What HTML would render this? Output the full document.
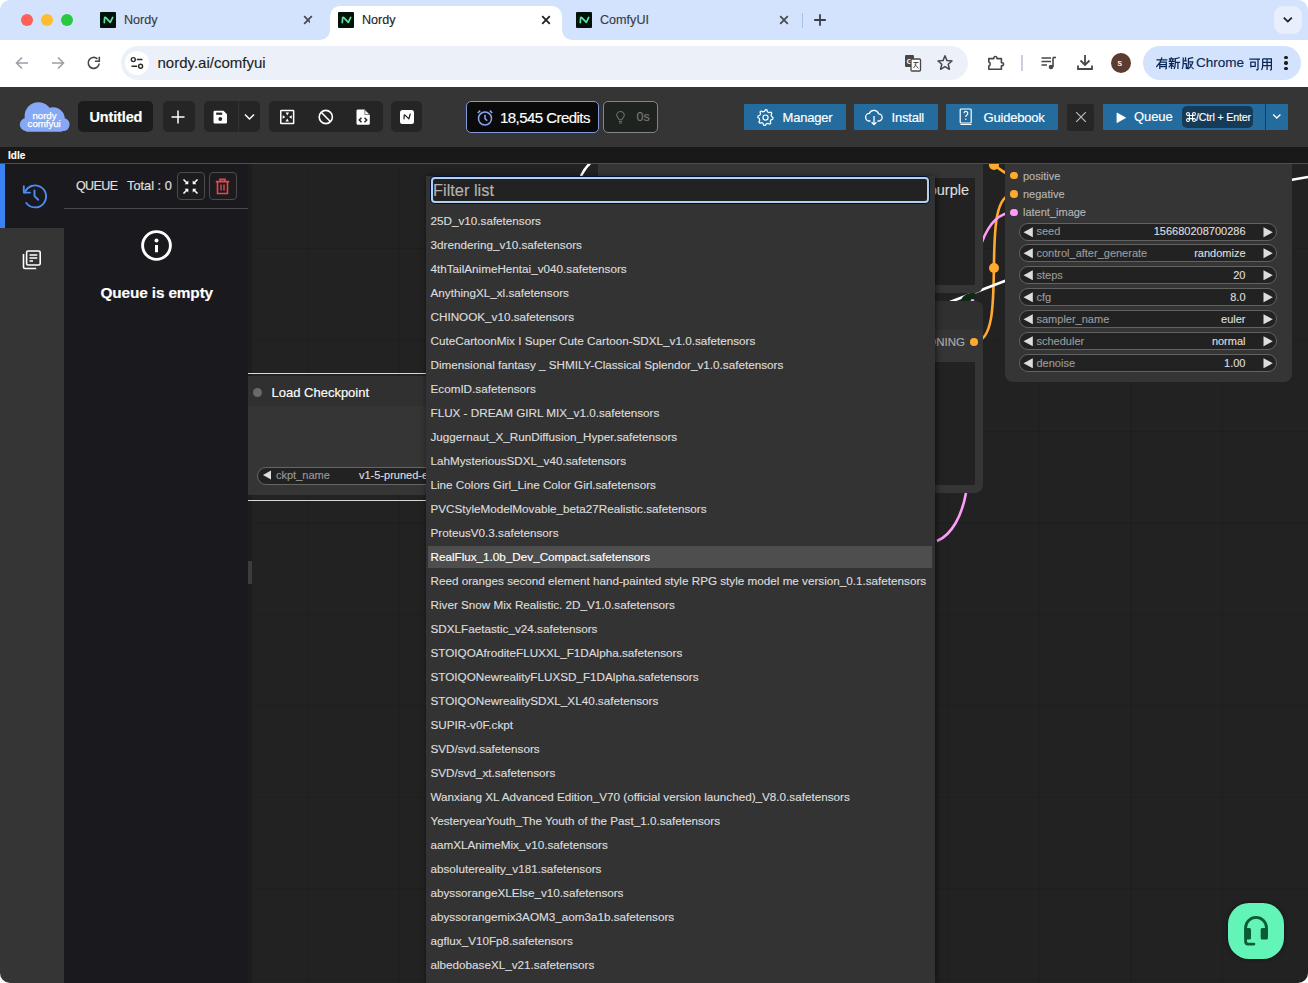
<!DOCTYPE html>
<html><head><meta charset="utf-8">
<style>
*{box-sizing:border-box;margin:0;padding:0}
html,body{width:1308px;height:983px;overflow:hidden;background:#fff;font-family:"Liberation Sans",sans-serif}
.win{position:absolute;left:0;top:0;width:1308px;height:983px;border-radius:10px;overflow:hidden;background:transparent}
.a{position:absolute}
.t{position:absolute;white-space:nowrap;line-height:1}
svg{position:absolute;overflow:visible}
</style></head><body>
<div class="win" style="-webkit-text-stroke:0.15px currentColor">
<!-- ============ CHROME TAB STRIP ============ -->
<div class="a" style="left:0;top:0;width:1308px;height:40px;background:#d3e3fd"></div>
<div class="a" style="left:21px;top:14px;width:12px;height:12px;border-radius:50%;background:#fe5f57"></div>
<div class="a" style="left:41px;top:14px;width:12px;height:12px;border-radius:50%;background:#febc2e"></div>
<div class="a" style="left:61px;top:14px;width:12px;height:12px;border-radius:50%;background:#28c840"></div>
<div id="tabs">
<!-- tab 1 -->
<div class="a" style="left:100px;top:12px;width:16px;height:16px;background:#03110b;border-radius:1px"></div>
<svg style="left:100px;top:12px" width="16" height="16"><path d="M4.3 10.6L4.6 6Q5 4.9 6 5.8L10.3 10.3L12.7 5.4" stroke="#5ce3a0" stroke-width="1.7" fill="none" stroke-linejoin="round" stroke-linecap="round"/></svg>
<div class="t" style="left:124px;top:14px;font-size:12.6px;color:#393c40">Nordy</div>
<svg style="left:303px;top:14.8px" width="10" height="10"><path d="M1.2 1.2L8.8 8.8M8.8 1.2L1.2 8.8" stroke="#474a4f" stroke-width="1.75"/></svg>
<!-- active tab -->
<div class="a" style="left:330px;top:6px;width:232px;height:40px;background:#fff;border-radius:10px 10px 0 0"></div>
<div class="a" style="left:320px;top:30px;width:10px;height:10px;background:#fff"></div>
<div class="a" style="left:310px;top:20px;width:20px;height:20px;background:#d3e3fd;border-radius:0 0 10px 0"></div>
<div class="a" style="left:562px;top:30px;width:10px;height:10px;background:#fff"></div>
<div class="a" style="left:562px;top:20px;width:20px;height:20px;background:#d3e3fd;border-radius:0 0 0 10px"></div>
<div class="a" style="left:338px;top:12px;width:16px;height:16px;background:#03110b;border-radius:1px"></div>
<svg style="left:338px;top:12px" width="16" height="16"><path d="M4.3 10.6L4.6 6Q5 4.9 6 5.8L10.3 10.3L12.7 5.4" stroke="#5ce3a0" stroke-width="1.7" fill="none" stroke-linejoin="round" stroke-linecap="round"/></svg>
<div class="t" style="left:362px;top:14px;font-size:12.6px;color:#1f1f1f">Nordy</div>
<svg style="left:541px;top:14.8px" width="10" height="10"><path d="M1.2 1.2L8.8 8.8M8.8 1.2L1.2 8.8" stroke="#1f1f1f" stroke-width="1.75"/></svg>
<!-- tab 3 -->
<div class="a" style="left:576px;top:12px;width:16px;height:16px;background:#03110b;border-radius:1px"></div>
<svg style="left:576px;top:12px" width="16" height="16"><path d="M4.3 10.6L4.6 6Q5 4.9 6 5.8L10.3 10.3L12.7 5.4" stroke="#5ce3a0" stroke-width="1.7" fill="none" stroke-linejoin="round" stroke-linecap="round"/></svg>
<div class="t" style="left:600px;top:14px;font-size:12.6px;color:#393c40">ComfyUI</div>
<svg style="left:779px;top:14.8px" width="10" height="10"><path d="M1.2 1.2L8.8 8.8M8.8 1.2L1.2 8.8" stroke="#474a4f" stroke-width="1.75"/></svg>
<div class="a" style="left:802px;top:13px;width:1px;height:15px;background:#a8c0e6"></div>
<svg style="left:813px;top:13px" width="14" height="14"><path d="M7 1.2V12.8M1.2 7H12.8" stroke="#3c3f44" stroke-width="1.8"/></svg>
<div class="a" style="left:1273.5px;top:6px;width:28px;height:28px;background:#e7eefc;border-radius:9px"></div>
<svg style="left:1282px;top:16px" width="12" height="8"><path d="M1.8 1.6L5.8 5.6L9.8 1.6" stroke="#1f1f1f" stroke-width="1.8" fill="none"/></svg>
</div>
<!-- ============ CHROME TOOLBAR ============ -->
<div class="a" style="left:0;top:40px;width:1308px;height:47px;background:#fff"></div>
<div id="toolbar">
<svg style="left:14px;top:55px" width="16" height="16"><path d="M14 8H2.5M8 2.5L2.5 8L8 13.5" stroke="#9aa0a6" stroke-width="1.6" fill="none"/></svg>
<svg style="left:50px;top:55px" width="16" height="16"><path d="M2 8H13.5M8 2.5L13.5 8L8 13.5" stroke="#9aa0a6" stroke-width="1.6" fill="none"/></svg>
<svg style="left:86px;top:55px" width="16" height="16"><path d="M13.2 8.5A5.5 5.5 0 1 1 11.4 3.8" stroke="#474747" stroke-width="1.6" fill="none"/><path d="M13.3 1.8V6.2H8.9" stroke="#474747" stroke-width="1.6" fill="none"/></svg>
<div class="a" style="left:121px;top:46px;width:847px;height:34px;background:#ecf1f9;border-radius:17px"></div>
<div class="a" style="left:125px;top:51px;width:24px;height:24px;background:#fff;border-radius:50%"></div>
<svg style="left:129px;top:55px" width="16" height="16"><circle cx="4.3" cy="4.6" r="2" stroke="#2b2b2b" stroke-width="1.4" fill="none"/><path d="M7.8 4.6H13.5M2.5 11.2H8.2" stroke="#2b2b2b" stroke-width="1.5"/><circle cx="11.6" cy="11.2" r="2" stroke="#2b2b2b" stroke-width="1.4" fill="none"/></svg>
<div class="t" style="left:157.5px;top:54.5px;font-size:15px;color:#1f1f1f">nordy.ai/comfyui</div>
<svg style="left:904px;top:54px" width="18" height="18"><rect x="1" y="1" width="9" height="12" rx="1.2" fill="#474747"/><text x="2.6" y="10" font-size="8" font-weight="bold" fill="#fff" font-family="Liberation Sans">G</text><rect x="7" y="5" width="9.5" height="12" rx="1" fill="#fff" stroke="#474747" stroke-width="1.3"/><path d="M9.5 8.5H14.5M12 8.2C12 11 10.5 13 9.5 14M11 10.5L14.5 14.5" stroke="#474747" stroke-width="1" fill="none"/></svg>
<svg style="left:936px;top:54px" width="18" height="18"><path d="M9 1.8L11 6.6L16 7L12.2 10.3L13.4 15.3L9 12.6L4.6 15.3L5.8 10.3L2 7L7 6.6Z" stroke="#474747" stroke-width="1.5" fill="none" stroke-linejoin="round"/></svg>
<svg style="left:986px;top:53px" width="18" height="18"><path d="M2.8 5.6H7.9A1.6 1.6 0 1 1 10.9 5.6H15.4V9.7A1.6 1.6 0 1 1 15.4 12.7V16.3H2.8V12.9A2.1 2.1 0 0 0 2.8 8.9Z" stroke="#474747" stroke-width="1.6" fill="none" stroke-linejoin="round"/></svg>
<div class="a" style="left:1021px;top:55px;width:1.5px;height:16px;background:#c7d0de"></div>
<svg style="left:1040px;top:54px" width="18" height="18"><path d="M1.5 4H11M1.5 7.5H11M1.5 11H7" stroke="#474747" stroke-width="1.5"/><path d="M13 3.5V13" stroke="#474747" stroke-width="1.6"/><path d="M13 3.5H16" stroke="#474747" stroke-width="1.6"/><circle cx="11" cy="13" r="2.3" fill="#474747"/></svg>
<svg style="left:1076px;top:53px" width="18" height="18"><path d="M9 2V12M4.5 7.5L9 12L13.5 7.5" stroke="#474747" stroke-width="1.8" fill="none"/><path d="M2 12.5V16H16V12.5" stroke="#474747" stroke-width="1.8" fill="none"/></svg>
<div class="a" style="left:1111px;top:52.5px;width:20px;height:20px;background:#5c3b30;border-radius:50%"></div>
<div class="t" style="left:1117.5px;top:58.5px;font-size:9px;color:#fff">s</div>
<div class="a" style="left:1143px;top:45.5px;width:158px;height:34.5px;background:#d3e3fd;border-radius:17px"></div>
<svg style="left:1155.5px;top:57px" width="38" height="12" fill="none" stroke="#0b2756" stroke-width="1.25"><path d="M0.5 2.8H11.3M6 0.3C5 4 3 7.5 0.3 10M3.8 5.2V12M3.8 5.2H10.3V11.3Q10.3 12 9.2 11.8M3.8 7.5H10.3M3.8 9.6H10.3"/><g transform="translate(12.3 0)"><path d="M3 0.2V1.6M0.5 1.8H6M1.6 2.5L2.3 4M4.7 2.5L4 4M0.3 4.4H6.2M0.6 6.6H5.8M3.2 4.4V12M3 7.3L0.4 10.4M3.5 7.9L5.4 9.8M11.4 0.5C9.8 1.2 8.3 1.6 7 1.7V6C7 9 6.6 10.5 5.8 12M7 5.4H11.8M9.6 5.4V12"/></g><g transform="translate(25.8 0)"><path d="M1.4 0.5V6.5C1.4 9 1 10.8 0.3 12M1.4 3.8H5M1.4 6.6H4.5V12M3.7 0.2V3.8M11.4 0.7C9.5 1.2 8 1.5 6.6 1.5V6C6.6 8.5 6.2 10.5 5.4 12M6.6 4.8H11C10.4 7.5 8.6 10.5 5.9 12M7.9 6.4C8.8 9 10 11 11.8 12"/></g></svg>
<svg style="left:1249px;top:57.5px" width="24" height="12" fill="none" stroke="#0b2756" stroke-width="1.25"><path d="M0.3 1.2H11M9 1.2V10.8C9 11.7 8.6 11.9 7.2 11.7M1.8 4.2H6.2V8.3H1.8ZM1.8 4.2V9.5"/><g transform="translate(12.2 0)"><path d="M1.5 0.8V7C1.5 9.3 1.1 10.8 0.3 12M1.5 0.8H10.2V11C10.2 11.8 9.8 12 8.8 11.8M1.5 4.3H10.2M1.5 7.6H10.2M5.9 0.8V12"/></g></svg>
<div class="t" style="left:1196px;top:55.5px;font-size:13.5px;color:#0b2756">Chrome</div>
<div class="a" style="left:1284.3px;top:55.9px;width:3.3px;height:3.3px;background:#1f1f1f;border-radius:50%"></div>
<div class="a" style="left:1284.3px;top:61.4px;width:3.3px;height:3.3px;background:#1f1f1f;border-radius:50%"></div>
<div class="a" style="left:1284.3px;top:67px;width:3.3px;height:3.3px;background:#1f1f1f;border-radius:50%"></div>
</div>
<!-- ============ APP TOP BAR ============ -->
<div class="a" style="left:0;top:87px;width:1308px;height:60px;background:#353535"></div>
<div id="appbar">
<svg style="left:0;top:0" width="80" height="140"><g fill="#86a9f7"><circle cx="38.4" cy="116" r="13.8"/><circle cx="53" cy="119" r="11.8"/><circle cx="63" cy="124.5" r="6.6"/><circle cx="26.2" cy="124.5" r="6.4"/><rect x="25" y="118" width="38" height="13.8" rx="2"/></g></svg>
<div class="t" style="left:32.5px;top:111.3px;font-size:9.7px;color:#fff;letter-spacing:-0.05px;-webkit-text-stroke:0.25px #fff">nordy</div>
<div class="t" style="left:27.6px;top:118.7px;font-size:9.7px;color:#fff;letter-spacing:-0.05px;-webkit-text-stroke:0.25px #fff">comfyui</div>
<div class="a" style="left:78px;top:101px;width:75px;height:31px;background:#1c1c1c;border-radius:5px"></div>
<div class="t" style="left:89.5px;top:109.5px;font-size:14.5px;font-weight:bold;color:#fff;letter-spacing:-0.15px">Untitled</div>
<div class="a" style="left:163px;top:101px;width:32px;height:31px;background:#252525;border-radius:5px"></div>
<svg style="left:170px;top:109px" width="16" height="16"><path d="M8 1.5V14.5M1.5 8H14.5" stroke="#fff" stroke-width="1.5"/></svg>
<div class="a" style="left:204px;top:101px;width:56px;height:31px;background:#252525;border-radius:5px"></div>
<div class="a" style="left:237.5px;top:101px;width:1px;height:31px;background:#333"></div>
<svg style="left:213px;top:110px" width="15" height="14"><path d="M1.5 0.8H10.5L14 4.3V12.2A1.2 1.2 0 0 1 12.8 13.4H1.7A1.2 1.2 0 0 1 0.5 12.2V2A1.2 1.2 0 0 1 1.5 0.8Z" fill="#fff"/><rect x="3.2" y="2.6" width="6" height="2.2" fill="#252525"/><circle cx="7.3" cy="9" r="1.9" fill="#252525"/></svg>
<svg style="left:244px;top:113px" width="12" height="8"><path d="M1 1.5L5.5 6L10 1.5" stroke="#fff" stroke-width="1.5" fill="none"/></svg>
<div class="a" style="left:269px;top:101px;width:114px;height:31px;background:#252525;border-radius:5px"></div>
<svg style="left:279px;top:109px" width="16" height="16"><rect x="1.75" y="1.55" width="12.9" height="13" stroke="#fff" stroke-width="1.5" fill="none" rx="0.6"/><path d="M6.6 3.6H10L8.3 6.4Z M6.5 12.4H9.9L8.2 9.6Z M3.6 6.3V9.7L6.4 8Z M12.8 6.3V9.7L10 8Z" fill="#fff"/></svg>
<svg style="left:318px;top:109px" width="16" height="16"><circle cx="7.8" cy="8" r="6.6" stroke="#fff" stroke-width="1.6" fill="none"/><path d="M3.2 3.3L12.5 12.7" stroke="#fff" stroke-width="1.6"/></svg>
<svg style="left:356px;top:109px" width="15" height="17"><path d="M1.5 0.6H8.6L13.8 5.8V14.4A1.3 1.3 0 0 1 12.5 15.7H1.5A1.2 1.2 0 0 1 0.5 14.5V1.8A1.2 1.2 0 0 1 1.5 0.6Z" fill="#fff"/><path d="M8.6 0.6V5.8H13.8" fill="#252525"/><path d="M9.2 1.4V5.2H13" fill="#fff"/><path d="M5.5 8.8L3.3 11L5.5 13.2M8.5 8.8L10.7 11L8.5 13.2" stroke="#252525" stroke-width="1.5" fill="none"/></svg>
<div class="a" style="left:391px;top:101px;width:31px;height:31px;background:#252525;border-radius:5px"></div>
<div class="a" style="left:399.5px;top:110px;width:14px;height:14px;background:#fff;border-radius:2.5px"></div>
<svg style="left:399.5px;top:110px" width="14" height="14"><path d="M4 8.8L4.2 5.3Q4.5 4.6 5.2 5.3L8.9 8.9L10.2 4" stroke="#1a1a1a" stroke-width="1.2" fill="none" stroke-linejoin="round" stroke-linecap="round"/></svg>
<!-- credits -->
<div class="a" style="left:466px;top:101px;width:133px;height:32px;background:#0a0a0a;border:1.5px solid #8397dc;border-radius:5px"></div>
<svg style="left:476px;top:109px" width="18" height="18"><circle cx="9" cy="9.5" r="6.5" stroke="#8fa3ee" stroke-width="1.5" fill="none"/><path d="M9 5.8V9.6L11.2 11.8" stroke="#8fa3ee" stroke-width="1.5" fill="none"/><path d="M1.8 4L4.2 1.6M16.2 4L13.8 1.6" stroke="#8fa3ee" stroke-width="1.5"/></svg>
<div class="t" style="left:500px;top:110px;font-size:15px;color:#fff;letter-spacing:-0.55px">18,545 Credits</div>
<div class="a" style="left:603px;top:101px;width:55px;height:32px;background:#1f231f;border:1.5px solid #858585;border-radius:5px"></div>
<svg style="left:614.5px;top:110.5px" width="12" height="13"><path d="M3.6 8.8C3.6 7.4 1.2 6.2 1.2 4.3A3.8 3.8 0 0 1 8.8 4.3C8.8 6.2 6.4 7.4 6.4 8.8Z" stroke="#6a6c6a" stroke-width="1.1" fill="none" transform="translate(0.5 0)"/><path d="M4 10.5H7M4 12H7" stroke="#6a6c6a" stroke-width="1"/></svg>
<div class="t" style="left:636.5px;top:110.5px;font-size:12.6px;color:#777977">0s</div>
<!-- right buttons -->
<div class="a" style="left:744px;top:104px;width:102px;height:26px;background:#246c9d;border-radius:1px"></div>
<svg style="left:756.5px;top:108.5px" width="17" height="17"><path d="M8.5 1.2L10 1.5L10.4 3.4L11.9 4.3L13.7 3.6L14.8 4.8L14.1 6.6L14.6 8.2L16.1 9.3L15.8 10.8L14 11.5L13.2 13L13.8 14.8L12.6 15.8L10.9 14.9L9.2 15.4L8.3 17L6.7 16.8L6.1 15L4.7 14.2L2.8 14.8L1.9 13.5L2.8 11.9L2.4 10.2L0.8 9.2L1 7.6L2.8 6.9L3.6 5.4L3 3.6L4.2 2.6L5.9 3.5L7.5 3Z" stroke="#fff" stroke-width="1.2" fill="none" stroke-linejoin="round" transform="translate(0 -0.6)"/><circle cx="8.5" cy="8.6" r="2.6" stroke="#fff" stroke-width="1.2" fill="none"/></svg>
<div class="t" style="left:782.5px;top:110.5px;font-size:13px;color:#fff;letter-spacing:-0.2px">Manager</div>
<div class="a" style="left:854px;top:104px;width:84px;height:26px;background:#246c9d;border-radius:1px"></div>
<svg style="left:865px;top:108px" width="18" height="18"><path d="M5.5 13H4.5A3.8 3.8 0 0 1 4.3 5.4A5 5 0 0 1 13.6 5.8A3.6 3.6 0 0 1 13.5 13H12.5" stroke="#fff" stroke-width="1.3" fill="none"/><path d="M9 8V16.5M6.6 14.2L9 16.6L11.4 14.2" stroke="#fff" stroke-width="1.3" fill="none"/></svg>
<div class="t" style="left:891.5px;top:110.5px;font-size:13px;color:#fff;letter-spacing:-0.2px">Install</div>
<div class="a" style="left:946px;top:104px;width:112px;height:26px;background:#246c9d;border-radius:1px"></div>
<svg style="left:959px;top:108px" width="14" height="18"><rect x="1.2" y="1" width="11" height="14" rx="1" stroke="#fff" stroke-width="1.2" fill="none"/><path d="M1.5 16.5H12.5" stroke="#fff" stroke-width="1"/><path d="M5 5.3A1.9 1.9 0 1 1 7.8 7C7 7.5 6.8 8 6.8 9" stroke="#fff" stroke-width="1.2" fill="none"/><circle cx="6.8" cy="11.2" r="0.7" fill="#fff"/></svg>
<div class="t" style="left:983.5px;top:110.5px;font-size:13px;color:#fff;letter-spacing:-0.2px">Guidebook</div>
<div class="a" style="left:1067px;top:103.5px;width:27px;height:27px;background:#262626;border-radius:2px"></div>
<svg style="left:1074.5px;top:111px" width="12" height="12"><path d="M1.2 1.2L10.8 10.8M10.8 1.2L1.2 10.8" stroke="#bdbdbd" stroke-width="1.2"/></svg>
<div class="a" style="left:1103px;top:104px;width:162px;height:26px;background:#246c9d;border-radius:1px 0 0 1px"></div>
<div class="a" style="left:1266px;top:104px;width:22px;height:26px;background:#246c9d;border-radius:0 1px 1px 0"></div>
<svg style="left:1115.5px;top:111.5px" width="12" height="12"><path d="M1 1V10.6L9.6 5.8Z" fill="#fff" stroke="#fff" stroke-width="0.8" stroke-linejoin="round"/></svg>
<div class="t" style="left:1134px;top:110.2px;font-size:13px;color:#fff;letter-spacing:-0.1px">Queue</div>
<div class="a" style="left:1182px;top:106px;width:71px;height:22px;background:#173a57;border-radius:5px"></div>
<svg style="left:1186px;top:111.8px" width="10" height="10"><path d="M3.4 1.8V8.2M6.6 1.8V8.2M1.8 3.4H8.2M1.8 6.6H8.2" stroke="#fff" stroke-width="1.05" fill="none"/><circle cx="2" cy="2" r="1.45" stroke="#fff" stroke-width="1.05" fill="none"/><circle cx="8" cy="2" r="1.45" stroke="#fff" stroke-width="1.05" fill="none"/><circle cx="2" cy="8" r="1.45" stroke="#fff" stroke-width="1.05" fill="none"/><circle cx="8" cy="8" r="1.45" stroke="#fff" stroke-width="1.05" fill="none"/></svg>
<div class="t" style="left:1196px;top:111.7px;font-size:10.6px;color:#fff;letter-spacing:-0.15px">/Ctrl + Enter</div>
<svg style="left:1272px;top:113.3px" width="12" height="8"><path d="M1.2 1.5L4.8 5L8.4 1.5" stroke="#fff" stroke-width="1.4" fill="none"/></svg>
</div>
<div class="a" style="left:0;top:147px;width:1308px;height:16px;background:#191919"></div>
<div class="t" style="left:8px;top:151px;font-size:10px;font-weight:bold;color:#fff">Idle</div>
<div class="a" style="left:0;top:163px;width:1308px;height:1px;background:#4d4d4d"></div>
<!-- ============ CANVAS ============ -->
<div class="a" style="left:0;top:164px;width:1308px;height:819px;overflow:hidden"><div class="a" style="left:0;top:-164px;width:1308px;height:983px" id="canvas">
<div class="a" style="left:248px;top:164px;width:1060px;height:819px;background-color:#222;background-image:linear-gradient(90deg,rgba(0,0,0,0.1) 1px,transparent 1px),linear-gradient(0deg,rgba(0,0,0,0.1) 1px,transparent 1px);background-size:91.5px 91.5px;background-position:59px 85px"></div>
<div class="a" style="left:248px;top:164px;width:4px;height:819px;background:#1d1d1d"></div>
<div class="a" style="left:248px;top:561px;width:4px;height:23px;background:#3c3c3c"></div>
<!-- wires -->
<svg style="left:0;top:0" width="1308" height="983">
<path d="M581 176C584 170 587 166 590 163.5" stroke="#fff" stroke-width="2.6" fill="none"/>
<path d="M974 342C1012 342 975.8 194 1013.8 194" stroke="#ffa931" stroke-width="2.6" fill="none"/>
<path d="M974.2 154.3C985.5 154.3 1002.5 175.7 1013.8 175.7" stroke="#ffa931" stroke-width="2.6" fill="none"/>
<circle cx="994" cy="165" r="5" fill="#ffa931"/>
<circle cx="994" cy="268" r="5" fill="#ffa931"/>
<path d="M1013.8 212.3C998 212.5 988 226 982 242" stroke="#ff9cf9" stroke-width="2.6" fill="none"/>
<path d="M966 493C962 515 952 535 937 541" stroke="#ff9cf9" stroke-width="2.6" fill="none"/>
<path d="M950 302L1010 279" stroke="#fff" stroke-width="2.6" fill="none"/>
<ellipse cx="969" cy="297.5" rx="8" ry="4" transform="rotate(-22 969 297.5)" fill="#0f2a14"/>
<circle cx="972.5" cy="301" r="2" fill="#ff9cf9"/>
<path d="M1285 181L1308 177" stroke="#fff" stroke-width="2.6" fill="none"/>
</svg>

<!-- top CLIP node (mostly hidden) -->
<div class="a" style="left:598px;top:150px;width:385px;height:143px;background:#353535;border-radius:0 0 8px 8px"></div>
<div class="a" style="left:610px;top:178px;width:365px;height:107px;background:#222"></div>
<div class="t" style="right:339px;top:183px;font-size:14.5px;color:#ddd">purple</div>
<!-- second CLIP node -->
<div class="a" style="left:600px;top:301px;width:383px;height:192px;background:#353535;border-radius:8px"></div>
<div class="a" style="left:600px;top:301px;width:383px;height:29px;background:#303030;border-radius:8px 8px 0 0"></div>
<div class="t" style="right:343px;top:336.5px;font-size:11.5px;color:#aaa">CONDITIONING</div>
<div class="a" style="left:970.2px;top:338px;width:7.6px;height:7.6px;border-radius:50%;background:#ffa931"></div>
<div class="a" style="left:610px;top:362px;width:365px;height:123px;background:#222"></div>
<!-- KSampler -->
<div class="a" style="left:1005px;top:150px;width:287px;height:232px;background:#353535;border-radius:0 0 8px 8px"></div>
<div class="a" style="left:1010px;top:171.9px;width:7.6px;height:7.6px;border-radius:50%;background:#ffa931"></div>
<div class="a" style="left:1010px;top:190.2px;width:7.6px;height:7.6px;border-radius:50%;background:#ffa931"></div>
<div class="a" style="left:1010px;top:208.5px;width:7.6px;height:7.6px;border-radius:50%;background:#ff9cf9"></div>
<div class="t" style="left:1023px;top:170.5px;font-size:11px;color:#b4b4b4">positive</div>
<div class="t" style="left:1023px;top:188.8px;font-size:11px;color:#b4b4b4">negative</div>
<div class="t" style="left:1023px;top:207px;font-size:11px;color:#b4b4b4">latent_image</div>
<div id="kw">
<div class="a" style="left:1018.5px;top:222.5px;width:258.5px;height:18px;background:#222;border:1px solid #626262;border-radius:9px"></div>
<svg style="left:1023px;top:226.5px" width="11" height="11"><path d="M9.8 0.2V10.2L0.5 5.2Z" fill="#ddd"/></svg>
<svg style="left:1262.5px;top:226.5px" width="11" height="11"><path d="M0.5 0.2V10.2L9.8 5.2Z" fill="#ddd"/></svg>
<div class="t" style="left:1036.5px;top:226.3px;font-size:11px;color:#9a9a9a">seed</div>
<div class="t" style="right:62.5px;top:226.3px;font-size:11px;color:#ddd">156680208700286</div>
<div class="a" style="left:1018.5px;top:244.4px;width:258.5px;height:18px;background:#222;border:1px solid #626262;border-radius:9px"></div>
<svg style="left:1023px;top:248.4px" width="11" height="11"><path d="M9.8 0.2V10.2L0.5 5.2Z" fill="#ddd"/></svg>
<svg style="left:1262.5px;top:248.4px" width="11" height="11"><path d="M0.5 0.2V10.2L9.8 5.2Z" fill="#ddd"/></svg>
<div class="t" style="left:1036.5px;top:248.2px;font-size:11px;color:#9a9a9a">control_after_generate</div>
<div class="t" style="right:62.5px;top:248.2px;font-size:11px;color:#ddd">randomize</div>
<div class="a" style="left:1018.5px;top:266.4px;width:258.5px;height:18px;background:#222;border:1px solid #626262;border-radius:9px"></div>
<svg style="left:1023px;top:270.4px" width="11" height="11"><path d="M9.8 0.2V10.2L0.5 5.2Z" fill="#ddd"/></svg>
<svg style="left:1262.5px;top:270.4px" width="11" height="11"><path d="M0.5 0.2V10.2L9.8 5.2Z" fill="#ddd"/></svg>
<div class="t" style="left:1036.5px;top:270.2px;font-size:11px;color:#9a9a9a">steps</div>
<div class="t" style="right:62.5px;top:270.2px;font-size:11px;color:#ddd">20</div>
<div class="a" style="left:1018.5px;top:288.3px;width:258.5px;height:18px;background:#222;border:1px solid #626262;border-radius:9px"></div>
<svg style="left:1023px;top:292.3px" width="11" height="11"><path d="M9.8 0.2V10.2L0.5 5.2Z" fill="#ddd"/></svg>
<svg style="left:1262.5px;top:292.3px" width="11" height="11"><path d="M0.5 0.2V10.2L9.8 5.2Z" fill="#ddd"/></svg>
<div class="t" style="left:1036.5px;top:292.1px;font-size:11px;color:#9a9a9a">cfg</div>
<div class="t" style="right:62.5px;top:292.1px;font-size:11px;color:#ddd">8.0</div>
<div class="a" style="left:1018.5px;top:310.2px;width:258.5px;height:18px;background:#222;border:1px solid #626262;border-radius:9px"></div>
<svg style="left:1023px;top:314.2px" width="11" height="11"><path d="M9.8 0.2V10.2L0.5 5.2Z" fill="#ddd"/></svg>
<svg style="left:1262.5px;top:314.2px" width="11" height="11"><path d="M0.5 0.2V10.2L9.8 5.2Z" fill="#ddd"/></svg>
<div class="t" style="left:1036.5px;top:314.0px;font-size:11px;color:#9a9a9a">sampler_name</div>
<div class="t" style="right:62.5px;top:314.0px;font-size:11px;color:#ddd">euler</div>
<div class="a" style="left:1018.5px;top:332.1px;width:258.5px;height:18px;background:#222;border:1px solid #626262;border-radius:9px"></div>
<svg style="left:1023px;top:336.1px" width="11" height="11"><path d="M9.8 0.2V10.2L0.5 5.2Z" fill="#ddd"/></svg>
<svg style="left:1262.5px;top:336.1px" width="11" height="11"><path d="M0.5 0.2V10.2L9.8 5.2Z" fill="#ddd"/></svg>
<div class="t" style="left:1036.5px;top:335.9px;font-size:11px;color:#9a9a9a">scheduler</div>
<div class="t" style="right:62.5px;top:335.9px;font-size:11px;color:#ddd">normal</div>
<div class="a" style="left:1018.5px;top:354.1px;width:258.5px;height:18px;background:#222;border:1px solid #626262;border-radius:9px"></div>
<svg style="left:1023px;top:358.1px" width="11" height="11"><path d="M9.8 0.2V10.2L0.5 5.2Z" fill="#ddd"/></svg>
<svg style="left:1262.5px;top:358.1px" width="11" height="11"><path d="M0.5 0.2V10.2L9.8 5.2Z" fill="#ddd"/></svg>
<div class="t" style="left:1036.5px;top:357.9px;font-size:11px;color:#9a9a9a">denoise</div>
<div class="t" style="right:62.5px;top:357.9px;font-size:11px;color:#ddd">1.00</div>
</div>
<!-- Load Checkpoint -->
<div class="a" style="left:248px;top:373px;width:300px;height:1.4px;background:#d8d8d8"></div>
<div class="a" style="left:248px;top:499.6px;width:300px;height:1.4px;background:#d8d8d8"></div>
<div class="a" style="left:248px;top:376px;width:300px;height:119px;background:#353535"></div>
<div class="a" style="left:248px;top:376px;width:300px;height:30px;background:#303030"></div>
<div class="a" style="left:252.7px;top:387.9px;width:9px;height:9px;border-radius:50%;background:#6a6a6a"></div>
<div class="t" style="left:271.5px;top:386px;font-size:13px;color:#fff">Load Checkpoint</div>
<div class="a" style="left:257px;top:466.5px;width:300px;height:18px;background:#222;border:1px solid #666;border-radius:9px"></div>
<svg style="left:262px;top:470px" width="10" height="10"><path d="M9 0.5V9.5L1 5Z" fill="#ddd"/></svg>
<div class="t" style="left:276px;top:470px;font-size:11px;color:#999">ckpt_name</div>
<div class="t" style="left:359px;top:470px;font-size:11px;color:#ddd">v1-5-pruned-emaonly.safetensors</div>

</div></div>
<!-- ============ SIDEBAR ============ -->
<div class="a" style="left:0;top:164px;width:64px;height:819px;background:#353535"></div>
<div class="a" style="left:0;top:164px;width:64px;height:64px;background:#19191e"></div>
<div class="a" style="left:0;top:164px;width:5px;height:64px;background:#3b82f6"></div>
<div class="a" style="left:64px;top:164px;width:184px;height:819px;background:#19191e"></div>
<div id="panel">
<svg style="left:21px;top:183px" width="26" height="26"><path d="M3.8 9.5A11 11 0 1 1 5.3 20" stroke="#4f8bf0" stroke-width="1.9" fill="none" stroke-linecap="round"/><path d="M2.8 3.2V9.6H9" stroke="#4f8bf0" stroke-width="1.9" fill="none" stroke-linecap="round" stroke-linejoin="round"/><path d="M13.5 7.5V13.2L17.2 16.8" stroke="#4f8bf0" stroke-width="1.9" fill="none" stroke-linecap="round"/></svg>
<svg style="left:22px;top:250px" width="20" height="20"><path d="M1.5 4V17A1.5 1.5 0 0 0 3 18.5H14.2" stroke="#fff" stroke-width="1.6" fill="none"/><rect x="4.6" y="1" width="13.6" height="14" rx="1.5" stroke="#fff" stroke-width="1.6" fill="none"/><path d="M7.5 5H15.3M7.5 8H15.3M7.5 11H11" stroke="#fff" stroke-width="1.5"/></svg>
<div class="t" style="left:76px;top:180px;font-size:12.5px;color:#e0e0e0;letter-spacing:-0.6px">QUEUE</div>
<div class="t" style="left:127px;top:180px;font-size:12.8px;color:#e0e0e0;letter-spacing:0px">Total : 0</div>
<div class="a" style="left:176.5px;top:172px;width:28px;height:28px;border:1.5px solid #4b4b4b;border-radius:4px;background:#1c1c1f"></div>
<svg style="left:182px;top:178px" width="17" height="17"><path d="M1.5 1.5L5.5 5.5M15.5 1.5L11.5 5.5M1.5 15.5L5.5 11.5M15.5 15.5L11.5 11.5" stroke="#fff" stroke-width="1.6"/><path d="M6.3 6.3V2.6L2.6 6.3Z M10.7 6.3V2.6L14.4 6.3Z M6.3 10.7V14.4L2.6 10.7Z M10.7 10.7V14.4L14.4 10.7Z" fill="#fff"/></svg>
<div class="a" style="left:208.5px;top:172px;width:28px;height:28px;border:1.5px solid #4b4b4b;border-radius:4px;background:#1c1c1f"></div>
<svg style="left:215px;top:177.5px" width="15" height="17"><path d="M0.8 3.6H14.2M5 3.6V1.4H10V3.6" stroke="#e5484d" stroke-width="1.6" fill="none"/><path d="M2.5 4V15.5H12.5V4" stroke="#e5484d" stroke-width="1.6" fill="none"/><path d="M6 6.5V12.5M9 6.5V12.5" stroke="#e5484d" stroke-width="1.4"/></svg>
<div class="a" style="left:64px;top:208px;width:184px;height:1px;background:#4a4a4a"></div>
<svg style="left:139px;top:227.5px" width="35" height="35"><circle cx="17.5" cy="17.5" r="13.9" stroke="#fff" stroke-width="2.9" fill="none"/><circle cx="17.5" cy="12.6" r="2" fill="#fff"/><path d="M17.5 17V24.2" stroke="#fff" stroke-width="3" stroke-linecap="butt"/></svg>
<div class="t" style="left:100.5px;top:284.8px;font-size:15.4px;font-weight:bold;color:#fff;letter-spacing:-0.15px">Queue is empty</div>
</div>
<div class="a" style="left:1228px;top:902.5px;width:56px;height:56px;background:#62f4b8;border-radius:21px;box-shadow:0 0 4px rgba(0,0,0,0.5)"></div>
<svg style="left:1240px;top:912px" width="32" height="36"><path d="M5.6 23V15.85A10.45 10.45 0 0 1 26.5 15.85V23" stroke="#0b5c34" stroke-width="2.8" fill="none"/><rect x="4.4" y="15.9" width="6.6" height="11.7" rx="1.5" fill="#0b5c34"/><rect x="20.7" y="15.9" width="7.2" height="11.7" rx="1.5" fill="#0b5c34"/><path d="M5.6 24V29.6Q5.6 32.1 8.1 32.1H13.9" stroke="#0b5c34" stroke-width="2.8" fill="none" stroke-linecap="round"/></svg>
<!-- ============ DROPDOWN ============ -->
<div id="dropdown">
<div class="a" style="left:426px;top:176px;width:509px;height:807px;background:#333;box-shadow:1px 1px 6px rgba(0,0,0,0.6)"></div>
<div class="a" style="left:430.3px;top:175.8px;width:500.2px;height:27.8px;border-radius:5px;background:#001030"></div>
<div class="a" style="left:431.3px;top:176.8px;width:498.2px;height:25.8px;border-radius:4px;background:#222;border:2px solid #b3cff2"></div>
<div class="t" style="left:433px;top:181.8px;font-size:16.4px;color:#b2b2b2">Filter list</div>
<div class="a" style="left:428px;top:546px;width:504px;height:22px;background:#4e4e4e"></div>
<div class="t" style="left:430.5px;top:214.5px;font-size:11.7px;color:#dcdcdc">25D_v10.safetensors</div>
<div class="t" style="left:430.5px;top:238.5px;font-size:11.7px;color:#dcdcdc">3drendering_v10.safetensors</div>
<div class="t" style="left:430.5px;top:262.5px;font-size:11.7px;color:#dcdcdc">4thTailAnimeHentai_v040.safetensors</div>
<div class="t" style="left:430.5px;top:286.5px;font-size:11.7px;color:#dcdcdc">AnythingXL_xl.safetensors</div>
<div class="t" style="left:430.5px;top:310.5px;font-size:11.7px;color:#dcdcdc">CHINOOK_v10.safetensors</div>
<div class="t" style="left:430.5px;top:334.5px;font-size:11.7px;color:#dcdcdc">CuteCartoonMix I Super Cute Cartoon-SDXL_v1.0.safetensors</div>
<div class="t" style="left:430.5px;top:358.5px;font-size:11.7px;color:#dcdcdc">Dimensional fantasy _ SHMILY-Classical Splendor_v1.0.safetensors</div>
<div class="t" style="left:430.5px;top:382.5px;font-size:11.7px;color:#dcdcdc">EcomID.safetensors</div>
<div class="t" style="left:430.5px;top:406.5px;font-size:11.7px;color:#dcdcdc">FLUX - DREAM GIRL MIX_v1.0.safetensors</div>
<div class="t" style="left:430.5px;top:430.5px;font-size:11.7px;color:#dcdcdc">Juggernaut_X_RunDiffusion_Hyper.safetensors</div>
<div class="t" style="left:430.5px;top:454.5px;font-size:11.7px;color:#dcdcdc">LahMysteriousSDXL_v40.safetensors</div>
<div class="t" style="left:430.5px;top:478.5px;font-size:11.7px;color:#dcdcdc">Line Colors Girl_Line Color Girl.safetensors</div>
<div class="t" style="left:430.5px;top:502.5px;font-size:11.7px;color:#dcdcdc">PVCStyleModelMovable_beta27Realistic.safetensors</div>
<div class="t" style="left:430.5px;top:526.5px;font-size:11.7px;color:#dcdcdc">ProteusV0.3.safetensors</div>
<div class="t" style="left:430.5px;top:550.5px;font-size:11.7px;color:#fff">RealFlux_1.0b_Dev_Compact.safetensors</div>
<div class="t" style="left:430.5px;top:574.5px;font-size:11.7px;color:#dcdcdc">Reed oranges second element hand-painted style RPG style model me version_0.1.safetensors</div>
<div class="t" style="left:430.5px;top:598.5px;font-size:11.7px;color:#dcdcdc">River Snow Mix Realistic. 2D_V1.0.safetensors</div>
<div class="t" style="left:430.5px;top:622.5px;font-size:11.7px;color:#dcdcdc">SDXLFaetastic_v24.safetensors</div>
<div class="t" style="left:430.5px;top:646.5px;font-size:11.7px;color:#dcdcdc">STOIQOAfroditeFLUXXL_F1DAlpha.safetensors</div>
<div class="t" style="left:430.5px;top:670.5px;font-size:11.7px;color:#dcdcdc">STOIQONewrealityFLUXSD_F1DAlpha.safetensors</div>
<div class="t" style="left:430.5px;top:694.5px;font-size:11.7px;color:#dcdcdc">STOIQONewrealitySDXL_XL40.safetensors</div>
<div class="t" style="left:430.5px;top:718.5px;font-size:11.7px;color:#dcdcdc">SUPIR-v0F.ckpt</div>
<div class="t" style="left:430.5px;top:742.5px;font-size:11.7px;color:#dcdcdc">SVD/svd.safetensors</div>
<div class="t" style="left:430.5px;top:766.5px;font-size:11.7px;color:#dcdcdc">SVD/svd_xt.safetensors</div>
<div class="t" style="left:430.5px;top:790.5px;font-size:11.7px;color:#dcdcdc">Wanxiang XL Advanced Edition_V70 (official version launched)_V8.0.safetensors</div>
<div class="t" style="left:430.5px;top:814.5px;font-size:11.7px;color:#dcdcdc">YesteryearYouth_The Youth of the Past_1.0.safetensors</div>
<div class="t" style="left:430.5px;top:838.5px;font-size:11.7px;color:#dcdcdc">aamXLAnimeMix_v10.safetensors</div>
<div class="t" style="left:430.5px;top:862.5px;font-size:11.7px;color:#dcdcdc">absolutereality_v181.safetensors</div>
<div class="t" style="left:430.5px;top:886.5px;font-size:11.7px;color:#dcdcdc">abyssorangeXLElse_v10.safetensors</div>
<div class="t" style="left:430.5px;top:910.5px;font-size:11.7px;color:#dcdcdc">abyssorangemix3AOM3_aom3a1b.safetensors</div>
<div class="t" style="left:430.5px;top:934.5px;font-size:11.7px;color:#dcdcdc">agflux_V10Fp8.safetensors</div>
<div class="t" style="left:430.5px;top:958.5px;font-size:11.7px;color:#dcdcdc">albedobaseXL_v21.safetensors</div>
</div>
</div>
</body></html>
